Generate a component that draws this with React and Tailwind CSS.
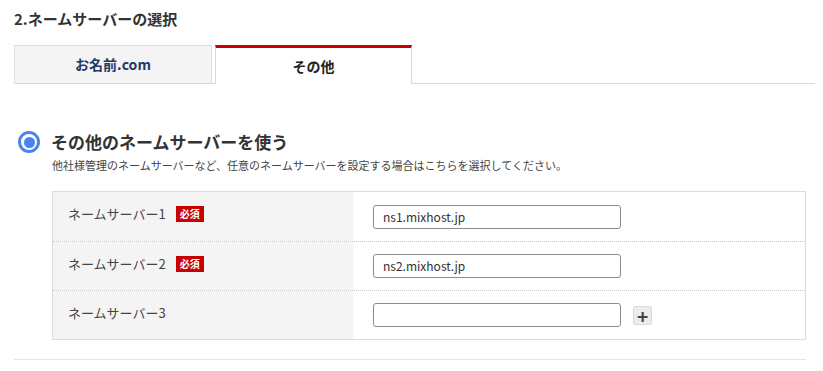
import React from 'react';

const FONT = "font-['Noto_Sans_CJK_JP','Noto_Sans',sans-serif]";

const ROWS = [
  { label: 'ネームサーバー1', required: true, value: 'ns1.mixhost.jp' },
  { label: 'ネームサーバー2', required: true, value: 'ns2.mixhost.jp' },
  { label: 'ネームサーバー3', required: false, value: '', plus: true },
];

export default function App() {
  return (
    <div className={`${FONT} w-[823px] h-[371px] bg-white text-[#333] overflow-hidden`}>
      {/* TITLE */}
      <div className="px-[14px] pt-[7px] h-[45px] text-[15px] font-bold leading-[24px]">
        2.ネームサーバーの選択
      </div>

      {/* TABS */}
      <div className="flex ml-[14px] mr-[8px] h-[39px] border-b border-[#d9d9d9]">
        <div className="w-[198px] flex items-center justify-center bg-[#f4f4f4] border border-[#dedede] border-b-0 text-[14px] font-bold text-[#1f3a66]">
          お名前.com
        </div>
        <div className="w-[197px] ml-[3px] -mb-px flex items-center justify-center bg-white border-x border-[#d9d9d9] border-t-[3px] border-t-[#cc0000] text-[14px] font-bold text-[#222]">
          その他
        </div>
      </div>

      {/* RADIO */}
      <div className="flex items-center gap-[11px] mt-[47px] ml-[18px]">
        <div className="w-[22px] h-[22px] rounded-full border-[3px] border-[#4a84ee] flex items-center justify-center">
          <div className="w-[11px] h-[11px] rounded-full bg-[#4a84ee]" />
        </div>
        <div className="text-[17px] font-bold leading-[22px] text-[#333]">
          その他のネームサーバーを使う
        </div>
      </div>
      <div className="ml-[52px] mt-[4px] text-[11px] leading-[16px] text-[#444]">
        他社様管理のネームサーバーなど、任意のネームサーバーを設定する場合はこちらを選択してください。
      </div>

      {/* TABLE */}
      <div className="ml-[52px] mr-[17px] mt-[18px] border border-[#dcdcdc]">
        {ROWS.map((row, i) => (
          <div
            key={row.label}
            className={`flex h-[49px] ${i > 0 ? 'border-t border-dotted border-[#c8c8c8]' : ''}`}
          >
            <div className="w-[300px] bg-[#f4f4f4] pl-[15px] pt-[12px] flex items-start gap-[10px]">
              <span className="text-[13px] leading-[19px] text-[#444]">{row.label}</span>
              {row.required && (
                <span className="mt-[2px] bg-[#c80000] text-white text-[10px] font-bold leading-[16px] px-[4px]">
                  必須
                </span>
              )}
            </div>
            <div className="flex-1 flex items-center pl-[20px] gap-[12px]">
              <div className="w-[248px] h-[24px] border border-[#8c8c8c] rounded-[3px] px-[9px] flex items-center text-[12px] text-[#333]">
                {row.value}
              </div>
              {row.plus && (
                <div className="w-[19px] h-[19px] bg-[#ececec] border border-[#dadada] rounded-[2px] flex items-center justify-center text-[#444] text-[19px] font-bold leading-none">
                  +
                </div>
              )}
            </div>
          </div>
        ))}
      </div>

      {/* DIVIDER */}
      <div className="ml-[14px] mr-[17px] mt-[19px] border-t border-[#e6e6e6]" />
    </div>
  );
}
